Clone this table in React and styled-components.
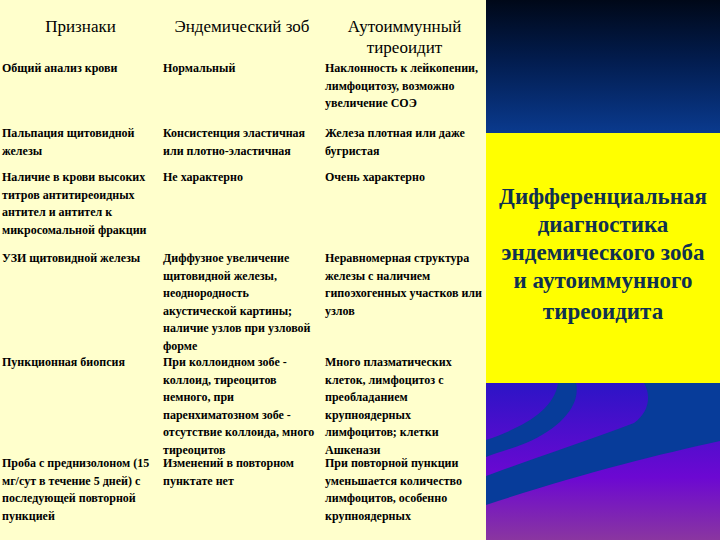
import React from "react";
import styled, { createGlobalStyle } from "styled-components";

const GlobalStyle = createGlobalStyle`
  html, body {
    margin: 0;
    padding: 0;
    width: 720px;
    height: 540px;
    overflow: hidden;
    background: #ffffcc;
  }
`;

const rows = [
  {
    sign: "Общий анализ крови",
    endemic: "Нормальный",
    autoimmune: "Наклонность к лейкопении, лимфоцитозу, возможно увеличение СОЭ",
    height: 65,
  },
  {
    sign: "Пальпация щитовидной железы",
    endemic: "Консистенция эластичная или плотно-эластичная",
    autoimmune: "Железа плотная или даже бугристая",
    height: 44,
  },
  {
    sign: "Наличие в крови высоких титров антитиреоидных антител и антител к микросомальной фракции",
    endemic: "Не характерно",
    autoimmune: "Очень характерно",
    height: 81,
  },
  {
    sign: "УЗИ щитовидной железы",
    endemic:
      "Диффузное увеличение щитовидной железы, неоднородность акустической картины; наличие узлов при узловой форме",
    autoimmune: "Неравномерная структура железы с наличием гипоэхогенных участков или узлов",
    height: 104,
  },
  {
    sign: "Пункционная биопсия",
    endemic:
      "При коллоидном зобе - коллоид, тиреоцитов немного, при паренхиматозном зобе - отсутствие коллоида, много тиреоцитов",
    autoimmune:
      "Много плазматических клеток, лимфоцитоз с преобладанием крупноядерных лимфоцитов; клетки Ашкенази",
    height: 101,
  },
  {
    sign: "Проба с преднизолоном (15 мг/сут в течение 5 дней) с последующей повторной пункцией",
    endemic: "Изменений в повторном пунктате нет",
    autoimmune:
      "При повторной пункции уменьшается количество лимфоцитов, особенно крупноядерных",
    height: 85,
  },
];

function App() {
  return (
    <>
      <GlobalStyle />
      <Slide>
        <Table>
          <HeadCell>Признаки</HeadCell>
          <HeadCell>Эндемический зоб</HeadCell>
          <HeadCell>Аутоиммунный тиреоидит</HeadCell>
          {rows.map((row) => (
            <React.Fragment key={row.sign}>
              <Cell $h={row.height}>{row.sign}</Cell>
              <Cell $h={row.height}>{row.endemic}</Cell>
              <Cell $h={row.height}>{row.autoimmune}</Cell>
            </React.Fragment>
          ))}
        </Table>
        <Side>
          <TopBand />
          <TitleBand>
            <Title>
              Дифференциальная диагностика эндемического зоба
              <br />и аутоиммунного
              <LastLine>тиреоидита</LastLine>
            </Title>
          </TitleBand>
          <WaveBand>
            <svg width="234" height="157" viewBox="0 0 234 157" preserveAspectRatio="none">
              <defs>
                <linearGradient id="waveBg" x1="0" y1="0" x2="0" y2="1">
                  <stop offset="0" stopColor="#2c14c6" />
                  <stop offset="0.6" stopColor="#6c08d2" />
                  <stop offset="1" stopColor="#8a36a0" />
                </linearGradient>
              </defs>
              <rect x="0" y="0" width="234" height="157" fill="url(#waveBg)" />
              <path
                d="M0 57 C 35 45, 68 28, 72 0 L 90 0 C 95 22, 75 45, 40 60 C 25 66, 10 70, 0 74 Z"
                fill="#073c9a"
              />
              <path
                d="M0 93 C 40 78, 100 58, 148 40 C 162 30, 166 14, 158 0 L 234 0 L 234 58 C 170 72, 90 92, 0 122 Z"
                fill="#073c9a"
              />
            </svg>
          </WaveBand>
        </Side>
      </Slide>
    </>
  );
}

const Slide = styled.div`
  width: 720px;
  height: 540px;
  display: flex;
  background: #ffffcc;
  overflow: hidden;
`;

const Table = styled.div`
  width: 486px;
  flex: none;
  display: grid;
  grid-template-columns: 161px 162px 163px;
  grid-auto-rows: min-content;
  padding-top: 16px;
  box-sizing: border-box;
  font-family: "Liberation Serif", "Times New Roman", serif;
  color: #000;
`;

const HeadCell = styled.div`
  height: 44px;
  font-size: 17px;
  line-height: 21px;
  text-align: center;
  padding: 0 6px;
`;

const Cell = styled.div`
  height: ${(p) => p.$h}px;
  font-size: 12px;
  font-weight: bold;
  line-height: 17.5px;
  padding: 0 3px 0 2px;
  overflow: visible;
`;

const Side = styled.div`
  width: 234px;
  flex: none;
  display: flex;
  flex-direction: column;
`;

const TopBand = styled.div`
  height: 133px;
  background: linear-gradient(#000818 0%, #021c4e 45%, #0a3a8e 100%);
`;

const TitleBand = styled.div`
  height: 250px;
  background: #ffff00;
  display: flex;
  align-items: flex-start;
  justify-content: center;
`;

const Title = styled.h1`
  margin: 50px 0 0;
  width: 232px;
  font-family: "Liberation Serif", "Times New Roman", serif;
  font-size: 23px;
  font-weight: bold;
  line-height: 28px;
  text-align: center;
  color: #0f3050;
`;

const LastLine = styled.span`
  display: block;
  margin-top: 3px;
`;

const WaveBand = styled.div`
  height: 157px;
  line-height: 0;
`;

export default App;
